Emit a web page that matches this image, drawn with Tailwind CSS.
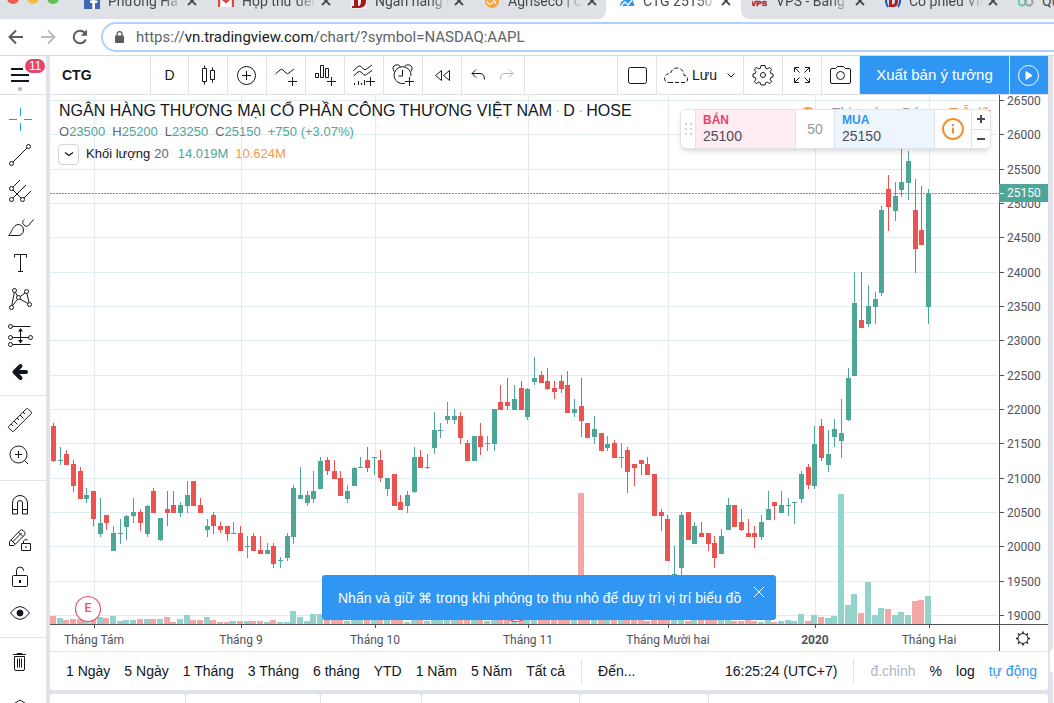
<!DOCTYPE html>
<html lang="vi">
<head>
<meta charset="utf-8">
<title>CTG 25150</title>
<script src="https://cdn.jsdelivr.net/npm/@tailwindcss/browser@4"></script>
</head>
<body class="h-screen overflow-hidden flex flex-col bg-white text-[#131722] font-['Liberation_Sans',Arial,sans-serif]">

<!-- Browser tabs -->
<div class="relative flex h-[19px] shrink-0 items-end overflow-hidden bg-[#dee1e6] font-[Roboto,sans-serif] text-sm text-[#45494d]">
  <div class="flex h-9 w-[73px] shrink-0 items-center gap-2 pl-[7px] pb-[6px]">
    <span class="size-3 rounded-full bg-[#ee5c54]"></span><span class="size-3 rounded-full bg-[#f6be40]"></span><span class="size-3 rounded-full bg-[#5fc454]"></span>
  </div>
  <div class="flex h-9 w-[134px] shrink-0 items-center pl-[11px] pr-[9px]">
    <svg class="size-4 shrink-0" viewBox="0 0 16 16"><rect width="16" height="16" fill="#4267b2"/><path d="M11 16V10h2.200l.4-2.500H11V6q0-1.300 1.400-1.300h1.300V2.400Q8.300 1.400 8.300 5.700v1.800H6V10h2.300v6z" fill="#fff"/></svg>
    <span class="ml-2 w-[74px] overflow-hidden whitespace-nowrap mask-r-from-75%">Phương Hà - Home</span>
    <button aria-label="Đóng tab" class="ml-auto"><svg class="size-3" viewBox="0 0 12 12" stroke="#45494d" stroke-width="1.800"><path d="M2 2l8 8M10 2l-8 8"/></svg></button>
  </div>
  <div class="h-7 w-px bg-[#8d9196]"></div>
  <div class="flex h-9 w-[133px] shrink-0 items-center pl-[11px] pr-2">
    <svg class="size-4 shrink-0" viewBox="0 0 16 16"><path d="M1 2h14v12H1z" fill="#fff"/><path d="M1 14V3l7 6 7-6v11" fill="none" stroke="#d8493e" stroke-width="2.400"/></svg>
    <span class="ml-2 w-[74px] overflow-hidden whitespace-nowrap mask-r-from-75%">Hộp thư đến (2)</span>
    <button aria-label="Đóng tab" class="ml-auto"><svg class="size-3" viewBox="0 0 12 12" stroke="#45494d" stroke-width="1.800"><path d="M2 2l8 8M10 2l-8 8"/></svg></button>
  </div>
  <div class="h-7 w-px bg-[#8d9196]"></div>
  <div class="flex h-9 w-[133px] shrink-0 items-center pl-[11px] pr-2">
    <svg class="size-4 shrink-0" viewBox="0 0 16 16"><rect width="16" height="16" fill="#f4eeee"/><path fill-rule="evenodd" d="M1 1h7q7 0 7 7t-7 7H1v-2h2V3H1zM7 3v10q3 0 3-5T7 3" fill="#a01c1c"/></svg>
    <span class="ml-2 w-[74px] overflow-hidden whitespace-nowrap mask-r-from-75%">Ngân hàng nhà</span>
    <button aria-label="Đóng tab" class="ml-auto"><svg class="size-3" viewBox="0 0 12 12" stroke="#45494d" stroke-width="1.800"><path d="M2 2l8 8M10 2l-8 8"/></svg></button>
  </div>
  <div class="h-7 w-px bg-[#8d9196]"></div>
  <div class="h-9 w-[133px] shrink-0 bg-white">
    <div class="flex h-9 items-center rounded-br-lg bg-[#dee1e6] pl-[11px] pr-2">
      <svg class="size-4 shrink-0" viewBox="0 0 16 16"><circle cx="8" cy="8" r="7" fill="#f4a340"/><path d="M3 8q2 5 5 2t4 1M6 7q3-2 5 1" fill="none" stroke="#fde9c8" stroke-width="1.500"/></svg>
      <span class="ml-2 w-[74px] overflow-hidden whitespace-nowrap mask-r-from-75%">Agriseco | Công</span>
      <button aria-label="Đóng tab" class="ml-auto"><svg class="size-3" viewBox="0 0 12 12" stroke="#45494d" stroke-width="1.800"><path d="M2 2l8 8M10 2l-8 8"/></svg></button>
    </div>
  </div>
  <div class="flex h-9 w-[135px] shrink-0 items-center bg-white pl-[13px] pr-[9px]">
    <svg class="size-4 shrink-0" viewBox="0 0 16 16"><path d="M1 13q0-4 3-5 2-5 6-3 4 0 4 4 2 2 1 4z" fill="#2f96f3"/><path d="M2 13l4-4 3 3 4-5" fill="none" stroke="#fff" stroke-width="1.300"/></svg>
    <span class="ml-2 w-[74px] overflow-hidden whitespace-nowrap mask-r-from-75%">CTG 25150 ▲ +3</span>
    <button aria-label="Đóng tab" class="ml-auto"><svg class="size-3" viewBox="0 0 12 12" stroke="#45494d" stroke-width="1.800"><path d="M2 2l8 8M10 2l-8 8"/></svg></button>
  </div>
  <div class="h-9 w-[133px] shrink-0 bg-white">
    <div class="flex h-9 items-center rounded-bl-lg bg-[#dee1e6] pl-[11px] pr-2">
      <svg class="size-4 shrink-0" viewBox="0 0 16 16"><text x="-1" y="13" font-size="8" font-weight="700" fill="#b3262c" font-family="Liberation Sans" stroke="#b3262c" stroke-width=".5">VPS</text></svg>
      <span class="ml-2 w-[74px] overflow-hidden whitespace-nowrap mask-r-from-75%">VPS - Bảng giá</span>
      <button aria-label="Đóng tab" class="ml-auto"><svg class="size-3" viewBox="0 0 12 12" stroke="#45494d" stroke-width="1.800"><path d="M2 2l8 8M10 2l-8 8"/></svg></button>
    </div>
  </div>
  <div class="h-7 w-px bg-[#8d9196]"></div>
  <div class="flex h-9 w-[133px] shrink-0 items-center pl-[11px] pr-2">
    <svg class="size-4 shrink-0" viewBox="0 0 16 16"><path d="M3 2q-4 6 0 12M13 2q4 6 0 12" fill="none" stroke="#1d50c8" stroke-width="2"/><path fill-rule="evenodd" d="M4 2h4q5 0 5 6t-5 6H4zM7 4.500v7q3 0 3-3.500T7 4.500" fill="#b01e23"/></svg>
    <span class="ml-2 w-[74px] overflow-hidden whitespace-nowrap mask-r-from-75%">Cổ phiếu VNM</span>
    <button aria-label="Đóng tab" class="ml-auto"><svg class="size-3" viewBox="0 0 12 12" stroke="#45494d" stroke-width="1.800"><path d="M2 2l8 8M10 2l-8 8"/></svg></button>
  </div>
  <div class="h-7 w-px bg-[#8d9196]"></div>
  <div class="flex h-9 w-[133px] shrink-0 items-center pl-[11px]">
    <svg class="size-4 shrink-0" viewBox="0 0 16 16" fill="none" stroke-width="2"><circle cx="4" cy="9" r="3.500" stroke="#6cc49a"/><circle cx="11" cy="9" r="3.500" stroke="#9a9ea2"/></svg>
    <span class="ml-2 whitespace-nowrap">Quản</span>
  </div>
</div>

<!-- Address bar -->
<div class="flex h-[37px] shrink-0 items-center border-b border-[#dadce0] font-[Roboto,sans-serif]">
  <button aria-label="Quay lại" class="ml-2 size-4"><svg viewBox="0 0 16 16" fill="none" stroke="#5a5d61" stroke-width="2"><path d="M15 8H2M8 1.500L1.500 8 8 14.500"/></svg></button>
  <button aria-label="Tiến" class="ml-4 size-4"><svg viewBox="0 0 16 16" fill="none" stroke="#babcbe" stroke-width="2"><path d="M1 8h13M8 1.500L14.500 8 8 14.500"/></svg></button>
  <button aria-label="Tải lại" class="ml-4 size-4"><svg viewBox="0 0 16 16" fill="none" stroke="#5a5d61" stroke-width="2"><path d="M13.800 10.500A6.300 6.300 0 1 1 12.500 3.500L14 5"/><path d="M15 .5v6.200H8.800z" fill="#5a5d61" stroke="none"/></svg></button>
  <div class="ml-[13px] -mr-6 flex h-[30px] flex-1 items-center rounded-full border-2 border-[#aed0fb] pl-3">
    <svg class="h-3 w-[9px]" viewBox="0 0 9 12"><rect y="4.500" width="9" height="7.500" rx="1" fill="#5a5d61"/><path d="M2 5V3.200a2.500 2.500 0 0 1 5 0V5" fill="none" stroke="#5a5d61" stroke-width="1.300"/></svg>
    <a href="https://vn.tradingview.com/chart/?symbol=NASDAQ:AAPL" class="ml-3 whitespace-nowrap text-[15px] text-[#606468]">https://<span class="text-[#202124]">vn.tradingview.com</span>/chart/?symbol=NASDAQ:AAPL</a>
  </div>
</div>

<div class="flex min-h-0 flex-1 bg-[#e0e3eb]">
  <!-- Drawing tools -->
  <nav class="mr-1 flex w-[46px] shrink-0 flex-col divide-y divide-[#e0e3eb] overflow-hidden bg-white [&_svg]:size-7 [&_svg]:fill-none [&_svg]:stroke-current [&_button]:flex [&_button]:h-9 [&_button]:w-full [&_button]:shrink-0 [&_button]:items-center [&_button]:pl-[6px]">
    <div class="relative h-[39px] shrink-0">
      <button aria-label="Menu"><svg viewBox="0 0 28 28" stroke-width="2"><path d="M5 9h12M5 15h18M5 21h18"/></svg></button>
      <span class="absolute left-[25px] top-[3px] rounded-full bg-[#e8446a] px-1 text-[12px] leading-[14px] text-white">11</span>
      <span class="absolute left-[18px] top-[31px] size-1 rounded-full bg-[#b2b5be]"></span>
    </div>
    <div class="shrink-0 py-[6px]">
      <button aria-label="Con trỏ" class="text-[#2196f3]"><svg viewBox="0 0 28 28"><path d="M14.500 3v8M14.500 18v8M3 14.500h8M18 14.500h8"/></svg></button>
      <button aria-label="Đường xu hướng"><svg viewBox="0 0 28 28"><circle cx="5.500" cy="22.500" r="2"/><circle cx="22.500" cy="5.500" r="2"/><path d="M7 21L21 7"/></svg></button>
      <button aria-label="Gann và Fibonacci"><svg viewBox="0 0 28 28"><circle cx="5.500" cy="11.500" r="2"/><circle cx="5.500" cy="22.500" r="2"/><circle cx="16.500" cy="22.500" r="2"/><path d="M7 10l7-7M7 21L20 8M18 21l7-7M7 13l8 8"/></svg></button>
      <button aria-label="Cọ vẽ"><svg viewBox="0 0 28 28"><path d="M2.500 22.500C6 20 6 12.500 12 11.500c3.500 0 5.500 2.500 5.500 5.500 0 3.500-2.500 5.500-5.500 5.500zM18.500 6.500c-2.500 1.500-2 4-.5 5.500 1.500 1.500 3.500 1.500 4.500.5l5-6"/></svg></button>
      <button aria-label="Văn bản"><svg viewBox="0 0 28 28"><path d="M8.500 8.500v-3h12v3M14.500 5.500v17M12 22.500h5"/></svg></button>
      <button aria-label="Mẫu hình"><svg viewBox="0 0 28 28"><circle cx="8.500" cy="5.500" r="2"/><circle cx="20.500" cy="6.500" r="2"/><circle cx="12.500" cy="12.500" r="2"/><circle cx="5.500" cy="22.500" r="2"/><circle cx="23.500" cy="19.500" r="2"/><path d="M8.300 7.500L5.800 20.500M9.500 7.500l2 3.500M14.200 11.500L19 8M20.900 8.500l2.200 9M14 14l8 4.500M11.500 14.300l-5 6.400"/></svg></button>
      <button aria-label="Dự báo"><svg viewBox="0 0 28 28"><circle cx="4.500" cy="5.500" r="2"/><circle cx="4.500" cy="16.500" r="2"/><circle cx="24.500" cy="16.500" r="2"/><circle cx="4.500" cy="23.500" r="2"/><path d="M6.500 5.500h18M6.500 16.500h16M6.500 23.500h18M14.500 8v13"/><path d="M12 10.500h5L14.500 7zM12 19h5l-2.500 3.500z" fill="currentColor" stroke="none"/></svg></button>
      <button aria-label="Mũi tên"><svg viewBox="0 0 28 28" stroke-width="4" stroke-linecap="round" stroke-linejoin="round"><path d="M20 15H9M14.500 9L8.500 15l6 6"/></svg></button>
    </div>
    <div class="shrink-0 py-[6px]">
      <button aria-label="Thước đo"><svg viewBox="0 0 28 28"><path d="M20.500 2.700L2.700 20.500q-.7 .7 0 1.400l3.400 3.400q.7 .7 1.400 0L25.300 7.500q.7-.7 0-1.400l-3.400-3.400q-.7-.7-1.400 0zM5 18l2 2M8 15l3.500 3.500M11 12l2 2M14 9l3.500 3.500M17 6l2 2"/></svg></button>
      <button aria-label="Phóng to"><svg viewBox="0 0 28 28"><circle cx="12.500" cy="12.500" r="8.500"/><path d="M12.500 9v7M9 12.500h7M18.500 18.500l3.500 3.500"/></svg></button>
    </div>
    <div class="shrink-0 py-[6px]">
      <button aria-label="Nam châm"><svg viewBox="0 0 28 28"><path d="M6.500 23v-11a7.500 7.500 0 0 1 15 0v11h-5v-11a2.500 2.500 0 0 0-5 0v11zM6.500 18.500h5M16.500 18.500h5"/></svg></button>
      <button aria-label="Giữ chế độ vẽ"><svg viewBox="0 0 28 28"><path d="M3.500 18.500v-4L14 3.500q1.500-1.500 3 0l1.500 1.500q1.500 1.500 0 3L8 18.500zM12.500 5l4.500 4.500M5 13l4 4M6.500 15l9-9"/><path d="M15.500 16.500h9v7h-9zM17.500 16.500v-2.500q1.500-2.500 4-1M20 19v2"/></svg></button>
      <button aria-label="Khóa"><svg viewBox="0 0 28 28"><rect x="6.500" y="12.500" width="15" height="11" rx="1"/><path d="M10.500 12.500V7.500a3.500 3.500 0 0 1 7 0V8"/><path d="M14 17v3" stroke-width="2"/></svg></button>
      <button aria-label="Ẩn bản vẽ"><svg viewBox="0 0 28 28"><path d="M4.500 14q9.500-13 19 0-9.500 13-19 0z"/><circle cx="14" cy="14" r="3" fill="currentColor"/></svg></button>
    </div>
    <div class="shrink-0 py-[6px]">
      <button aria-label="Xóa"><svg viewBox="0 0 28 28"><path d="M7 6.500h13M11 6.500v-1h5v1M8.500 8.500h10V21q0 1.500-1.500 1.500h-7q-1.500 0-1.500-1.500zM11.500 10.500v9M13.500 10.500v9M15.500 10.500v9"/></svg></button>
      <button aria-label="Cây đối tượng"><svg viewBox="0 0 28 28"><path d="M6 21l8-5 8 5"/></svg></button>
    </div>
  </nav>

  <div class="mr-[5px] flex min-w-0 flex-1 flex-col">
    <!-- Top toolbar -->
    <div class="flex h-[39px] shrink-0 items-stretch border-b border-[#e0e3eb] bg-white [&_svg]:size-7 [&_svg]:fill-none [&_svg]:stroke-current [&>button]:flex [&>button]:shrink-0 [&>button]:items-center [&>button]:justify-center [&>button]:border-r [&>button]:border-[#e0e3eb]">
      <button class="w-[101px] justify-start! pl-3 text-sm font-bold">CTG</button>
      <button class="w-[38px] text-sm">D</button>
      <button aria-label="Kiểu nến" class="w-[39px]"><svg viewBox="0 0 28 28"><path d="M8.500 7.500h4v13h-4zM10.500 4.500v3M10.500 20.500v3M16.500 9.500h4v9h-4zM18.500 6.500v3M18.500 18.500v3"/></svg></button>
      <button aria-label="So sánh" class="w-[39px]"><svg viewBox="0 0 28 28"><circle cx="13.500" cy="14.500" r="9"/><path d="M13.500 10v9M9 14.500h9"/></svg></button>
      <button aria-label="Chỉ báo" class="w-[39px]"><svg viewBox="0 0 28 28"><path d="M3.500 13l4.500-4q1.500-1.500 3 0l3 3q1.500 1.500 3 0l5-4M20.500 16v9M16 20.500h9"/></svg></button>
      <button aria-label="Chỉ số tài chính" class="w-[39px]"><svg viewBox="0 0 28 28"><path d="M4.500 12.500h3v4h-3zM9.500 4.500h3v12h-3zM14.500 7.500h3v9h-3zM20.500 16v9M16 20.500h9"/></svg></button>
      <button aria-label="Mẫu chỉ báo" class="w-[39px]"><svg viewBox="0 0 28 28"><path d="M3.500 9.500l4.500-4q1.500-1 3 0l2.500 2.500q1.500 1.500 3 0l5.500-4M3.500 15l4.500-4q1.500-1 3 0l2.500 2.500q1.500 1.500 3 0l5.500-4M4.500 22v2M8.500 20v4M11.500 22v2M14.500 19v5M20.500 16v9M16 20.500h9"/></svg></button>
      <button aria-label="Cảnh báo" class="w-[39px]"><svg viewBox="0 0 28 28"><path d="M16 22.300A8.500 8.500 0 1 1 22 15M13.500 9v6h-4M5 10.500q-2.500-5 1.500-6.500 3-1 5 1.500M22 10.500q2.500-5-1.500-6.500-3-1-5 1.500M20.500 16v9M16 20.500h9"/></svg></button>
      <button aria-label="Phát lại" class="w-[39px]"><svg viewBox="0 0 28 28"><path d="M13.500 9.500v10l-6-5zM21.500 9.500v10l-6-5z"/></svg></button>
      <div class="flex w-[63px] shrink-0 items-center border-r border-[#e0e3eb]">
        <button aria-label="Hoàn tác" class="ml-[2px]"><svg viewBox="0 0 28 28"><path d="M12 8.500l-4 4 4 4M8 12.500h8q4.500 0 4.500 6"/></svg></button>
        <button aria-label="Làm lại" class="text-[#b2b5be]"><svg viewBox="0 0 28 28"><path d="M17 8.500l4 4-4 4M21 12.500h-8q-4.500 0-4.500 6"/></svg></button>
      </div>
      <div class="min-w-0 flex-1 border-r border-[#e0e3eb]"></div>
      <button aria-label="Bố cục" class="w-[39px]"><svg viewBox="0 0 28 28"><rect x="5.500" y="6.500" width="18" height="16" rx="2"/></svg></button>
      <button class="w-[87px] text-sm"><svg viewBox="0 0 28 28" class="-ml-[2px]"><path stroke-dasharray="4 2" d="M7 21.500h16q3-1 2.500-4-.5-3-3.500-3-.5-7-7-7.500-5 0-6.500 5.500-5 0-6 4.500 0 4 4.500 4.500z"/></svg><span class="ml-[2px]">Lưu</span><svg viewBox="0 0 28 28" class="-mr-[9px]"><path d="M10.500 12.500l3.500 3.500 3.500-3.500"/></svg></button>
      <button aria-label="Thiết lập" class="w-[39px]"><svg viewBox="0 0 28 28"><circle cx="14" cy="14" r="2.500"/><path stroke-linejoin="round" d="M12 4.500h4l.6 2.700 1.700.7 2.400-1.500 1.900 1.900-1.500 2.400.7 1.700 2.200.6v3l-2.200.6-.7 1.700 1.500 2.400-1.900 1.900-2.400-1.500-1.700.7-.6 2.200h-4l-.6-2.200-1.700-.7-2.400 1.500-1.900-1.900 1.500-2.400-.7-1.700-2.200-.6v-3l2.200-.6.7-1.700-1.500-2.400 1.900-1.900 2.400 1.500 1.700-.7z"/></svg></button>
      <button aria-label="Toàn màn hình" class="w-[39px]"><svg viewBox="0 0 28 28"><path d="M6.500 11v-4.500h4.500M17 6.500h4.500v4.500M21.500 17v4.500h-4.500M11 21.500h-4.500v-4.500M7 7l4.500 4.500M21 7l-4.500 4.500M21 21l-4.500-4.500M7 21l4.500-4.500"/></svg></button>
      <button aria-label="Chụp ảnh" class="w-[38px]"><svg viewBox="0 0 28 28"><path d="M5 7.500h3.500l2-2h6l2 2h3.500q1.500 0 1.500 1.500v12q0 1.500-1.500 1.500h-17q-1.500 0-1.500-1.500v-12q0-1.500 1.500-1.500z"/><circle cx="13.500" cy="14.500" r="4"/></svg></button>
      <button class="w-[150px] bg-[#3096f3] text-[15px] text-white">Xuất bản ý tưởng</button>
      <button aria-label="Phát" class="w-[38px] border-r-0! bg-[#3096f3] text-white"><svg viewBox="0 0 28 28"><circle cx="13.500" cy="14.500" r="10"/><path d="M11 10.500v8l6-4z" fill="currentColor"/></svg></button>
    </div>

    <!-- Chart -->
    <div class="relative min-h-0 flex-1 bg-white">
      <svg id="chart" class="absolute inset-0 size-full font-[Roboto,sans-serif] text-[12px]" viewBox="50 95 998 556" preserveAspectRatio="xMinYMin meet" shape-rendering="crispEdges" aria-label="Biểu đồ giá CTG"></svg>

      <div class="absolute left-[9px] top-[6px] flex flex-col text-sm">
        <h1 class="flex gap-[3px] text-[16px] leading-5"><span>NGÂN HÀNG THƯƠNG MẠI CỔ PHẦN CÔNG THƯƠNG VIỆT NAM</span><span class="text-[#b2b5be]">·</span><span>D</span><span class="text-[#b2b5be]">·</span><span>HOSE</span></h1>
        <p class="flex gap-[7px] text-[13px] leading-[21px] text-[#62656f] [&_b]:font-normal [&_b]:text-[#4ea699]"><span>O<b>23500</b></span><span>H<b>25200</b></span><span>L<b>23250</b></span><span>C<b>25150</b></span><b>+750 (+3.07%)</b></p>
        <div class="-ml-px flex items-center text-[13px] leading-6">
          <button aria-label="Thu gọn" class="flex size-[21px] items-center justify-center rounded-sm border border-[#d1d4dc] bg-white"><svg class="size-3" viewBox="0 0 12 12" fill="none" stroke="#131722" stroke-width="1.300"><path d="M2 4.500l4 3 4-3"/></svg></button>
          <span class="ml-[7px]">Khối lượng</span><span class="ml-1 text-[#62656f]">20</span><span class="ml-[9px] text-[#4ea699]">14.019M</span><span class="ml-[7px] text-[#f2994a]">10.624M</span>
        </div>
      </div>

      <!-- Market status, partly under the order panel -->
      <div class="absolute right-[57px] top-2 flex h-5 items-center text-sm whitespace-nowrap text-[#9598a1]">
        <span class="mr-4 mt-1 size-4 rounded-full bg-[#f2994a]"></span><span>Thị trường Đóng</span><span class="ml-[14px] text-[#f2994a]">Trễ dữ</span>
      </div>

      <!-- Order panel -->
      <div class="absolute right-[57px] top-[14px] flex h-10 divide-x divide-[#e0e3eb] overflow-hidden rounded-md border border-[#e0e3eb] bg-white text-sm leading-4 text-[#4a4d57] shadow-md">
        <div class="flex w-[15px] items-center justify-center"><svg class="h-3 w-[7px]" viewBox="0 0 7 12" fill="#d1d4dc"><path d="M0 0h2v2H0zM5 0h2v2H5zM0 5h2v2H0zM5 5h2v2H5zM0 10h2v2H0zM5 10h2v2H5z"/></svg></div>
        <button class="w-[100px] bg-[#fdecf2] pb-[2px] pl-[7px] text-left"><b class="block text-[12px] text-[#e8446a]">BÁN</b>25100</button>
        <div class="flex w-[39px] items-center justify-center text-[#9598a1]">50</div>
        <button class="w-[100px] bg-[#eef6fd] pb-[2px] pl-[7px] text-left"><b class="block text-[12px] text-[#3096f3]">MUA</b>25150</button>
        <button aria-label="Thông tin" class="flex w-[37px] items-center justify-center"><svg class="size-6" viewBox="0 0 24 24" fill="none" stroke="#ef9234" stroke-width="2"><circle cx="12" cy="12" r="10"/><path d="M12 10.500v6M12 7v2"/></svg></button>
        <div class="flex w-[18px] flex-col divide-y divide-[#e0e3eb] [&_button]:flex [&_button]:flex-1 [&_button]:items-center [&_button]:justify-center">
          <button aria-label="Tăng"><svg class="size-2" viewBox="0 0 8 8" stroke="#4a4d57" stroke-width="2"><path d="M4 0v8M0 4h8"/></svg></button>
          <button aria-label="Giảm"><svg class="size-2" viewBox="0 0 8 8" stroke="#4a4d57" stroke-width="2"><path d="M0 4h8"/></svg></button>
        </div>
      </div>

      <!-- Hint -->
      <div class="absolute bottom-[31px] left-[272px] flex h-[45px] w-[454px] items-center rounded-[3px] bg-[#3096f3] pl-4 text-sm whitespace-nowrap text-white">
        <span>Nhấn và giữ ⌘ trong khi phóng to thu nhỏ để duy trì vị trí biểu đồ</span>
        <button aria-label="Đóng" class="absolute right-[11px] top-[11px]"><svg class="size-3" viewBox="0 0 12 12" stroke="#fff"><path d="M1 1l10 10M11 1L1 11"/></svg></button>
      </div>
    </div>

    <!-- Range toolbar -->
    <div class="flex h-[39px] shrink-0 items-center rounded-b-[3px] border-t border-[#e0e3eb] bg-white pl-4 pr-[11px] text-sm whitespace-nowrap">
      <div class="flex gap-[14px]"><button>1 Ngày</button><button>5 Ngày</button><button>1 Tháng</button><button>3 Tháng</button><button>6 tháng</button><button>YTD</button><button>1 Năm</button><button>5 Năm</button><button>Tất cả</button></div>
      <div class="mx-4 h-6 w-px bg-[#e0e3eb]"></div>
      <button>Đến...</button>
      <button class="ml-auto">16:25:24 (UTC+7)</button>
      <div class="mx-4 h-6 w-px bg-[#e0e3eb]"></div>
      <div class="flex gap-[14px]"><button class="text-[#b2b5be]">đ.chỉnh</button><button>%</button><button>log</button><button class="text-[#2f96f3]">tự động</button></div>
    </div>

    <!-- Bottom panel tabs -->
    <div class="mt-1 flex h-[9px] shrink-0 gap-px [&>div]:rounded-t-[3px] [&>div]:bg-white">
      <div class="w-[135px]"></div><div class="w-[134px]"></div><div class="w-[100px]"></div><div class="w-[157px]"></div><div class="w-[128px]"></div><div class="flex-1"></div>
    </div>
  </div>
  <div class="flex w-px shrink-0 items-end bg-white pb-[30px]"><div class="-ml-[3px] h-6 w-1 shrink-0 rounded-l-sm bg-white"></div></div>
</div>

<script>
// Each candle: colour, high, body top, body bottom, low, volume height
const rows = `r423,426,461,462,8 g447,460,461,465,6 r450,454,465,465,4 r460,464,486,492,5 r467,471,499,499,5 g488,495,499,503,4 r491,491,519,526,4 g498,523,534,537,7 r515,515,523,530,6 g526,533,551,551,8
g519,533,534,544,3 g515,516,527,540,4 g498,512,516,523,4 r509,512,523,531,5 g505,506,534,537,5 r488,491,513,513,5 g518,518,540,541,5 r491,509,513,526,7 r491,505,513,513,2 g502,505,513,517,5
g481,495,506,513,9 r481,481,506,506,4 r498,505,513,513,4 g519,526,530,537,7 r512,515,526,534,4 r522,526,530,533,2 r526,526,534,541,2 g522,533,534,534,3 r526,533,551,551,3 g536,546,547,558,3
r533,536,551,551,3 r536,550,554,554,3 g543,550,554,554,2 r543,546,564,568,4 g557,560,561,568,2 g533,536,558,561,2 g485,488,537,544,13 g467,495,499,499,7 g491,495,503,506,3 g471,491,499,503,10
g457,461,489,489,10 r457,460,471,475,5 r460,471,479,479,5 r471,478,496,496,5 g485,491,499,503,3 g467,468,486,486,5 g457,467,468,468,5 r447,460,468,472,5 g457,457,458,475,5 r450,460,478,482,5
g478,478,489,496,5 r474,474,506,506,5 r495,502,510,510,4 g491,495,506,513,2 g447,457,492,493,5 r450,457,468,468,4 g454,467,468,469,3 g412,430,448,454,5 g423,430,431,438,5 g402,416,420,424,5
g409,416,420,424,5 r412,416,438,444,5 r440,443,461,461,5 g436,436,461,461,5 r423,436,447,455,5 g436,443,444,451,3 g409,409,444,451,5 r385,402,410,410,4 r378,402,406,410,5 g385,399,410,410,5
r381,388,410,410,5 g388,389,417,420,5 g357,378,382,385,5 r371,375,383,383,5 r368,381,389,390,5 r381,388,392,399,5 r375,381,389,393,5 r371,385,413,413,5 g399,409,413,417,5 r378,406,421,437,131
r423,423,438,438,5 g416,429,437,444,5 r433,433,451,451,5 g436,444,448,451,5 r440,443,458,458,5 g443,457,458,468,5 r447,450,472,493,4 r464,464,468,486,4 r460,460,464,475,4 r457,464,475,475,3
r474,474,516,516,4 r509,512,516,531,4 r515,519,561,561,5 g546,574,578,580,4 g512,515,568,577,5 r512,512,540,540,3 g522,526,544,544,5 r522,533,537,537,4 r533,533,544,551,4 r536,543,558,568,4
g529,536,554,554,5 g498,505,530,530,5 r505,505,527,527,3 r509,522,530,531,3 r519,533,537,537,5 r526,533,537,548,3 g515,522,537,540,2 g491,509,520,520,4 r502,502,506,520,2 g491,505,513,513,3
g498,505,506,516,4 g502,502,503,524,3 g471,474,499,503,10 r464,467,485,489,3 g426,444,486,489,9 r419,426,458,461,7 g430,454,465,472,6 g419,429,437,447,8 g399,433,441,458,130 g368,378,420,421,19
g272,303,376,376,30 r272,320,328,328,11 g285,306,324,327,42 g292,299,307,324,9 g206,210,293,296,16 r175,189,207,231,15 g182,196,211,221,9 g140,182,190,197,12 g151,161,183,200,9 r179,210,249,273,23
r186,230,245,245,24 g189,193,307,324,28`.split(/\s+/);
const out = [];
const rect = (x, y, w, h, f) => out.push(`<rect x="${x}" y="${y}" width="${w}" height="${h}" fill="${f}"/>`);
const months = [[94, 'Tháng Tám'], [241, 'Tháng 9'], [375, 'Tháng 10'], [528, 'Tháng 11'], [668, 'Tháng Mười hai'], [815, '2020'], [929, 'Tháng Hai']];
months.forEach(([x]) => rect(x, 95, 1, 529, '#e1ecf2'));
for (let i = 0; i < 16; i++) rect(50, Math.round(100 + i * 34.33), 948, 1, '#e1ecf2');
const data = rows.map((s, i) => [51 + Math.round(i * 6.679), s[0], ...s.slice(1).split(',').map(Number)]);
data.forEach(([x, c, , , , , v]) => rect(x - 1, 624 - v, 6, v, c === 'g' ? '#93d3cc' : '#f3a6a6'));
data.forEach(([x, c, h, t, b, l]) => {
  const f = c === 'g' ? '#4ea699' : '#ea5350';
  rect(x + 2, h, 1, l - h, f);
  rect(x, t, 5, b - t, f);
});
out.push('<path d="M50 193.500H999" stroke="#4ea699" stroke-dasharray="2 1"/>');
[88, 516].forEach(x => out.push(`<circle cx="${x}" cy="609" r="12.500" fill="#fff" stroke="#e8536a" stroke-width="1.200" shape-rendering="auto"/>`));
out.push('<text x="88" y="612" text-anchor="middle" font-weight="500" fill="#e8536a">E</text>');
rect(50, 624, 998, 1, '#50535e');
rect(999, 95, 1, 556, '#50535e');
months.forEach(([x, t]) => {
  rect(x, 625, 1, 3, '#50535e');
  out.push(`<text x="${x}" y="644" text-anchor="middle" fill="#50535e"${t === '2020' ? ' font-weight="700"' : ''}>${t}</text>`);
});
for (let i = 0; i < 16; i++) {
  const y = Math.round(100 + i * 34.33);
  rect(1000, y, 4, 1, '#50535e');
  out.push(`<text x="1007" y="${y + 5}" fill="#50535e">${26500 - i * 500}</text>`);
}
rect(999, 184, 49, 18, '#4ea699');
rect(1000, 193, 4, 1, '#fff');
out.push('<text x="1007" y="197" fill="#fff">25150</text>');
out.push('<g fill="none" stroke="#131722" shape-rendering="auto"><circle cx="1023" cy="638.500" r="5"/><path d="M1023 631.500v2M1023 643.500v2M1016 638.500h2M1028 638.500h2M1018 633.500l1.500 1.500M1026.500 642l1.500 1.500M1018 643.500l1.500-1.500M1026.500 635l1.500-1.500" stroke-width="1.500"/></g>');
document.getElementById('chart').innerHTML = out.join('');
</script>
</body>
</html>
